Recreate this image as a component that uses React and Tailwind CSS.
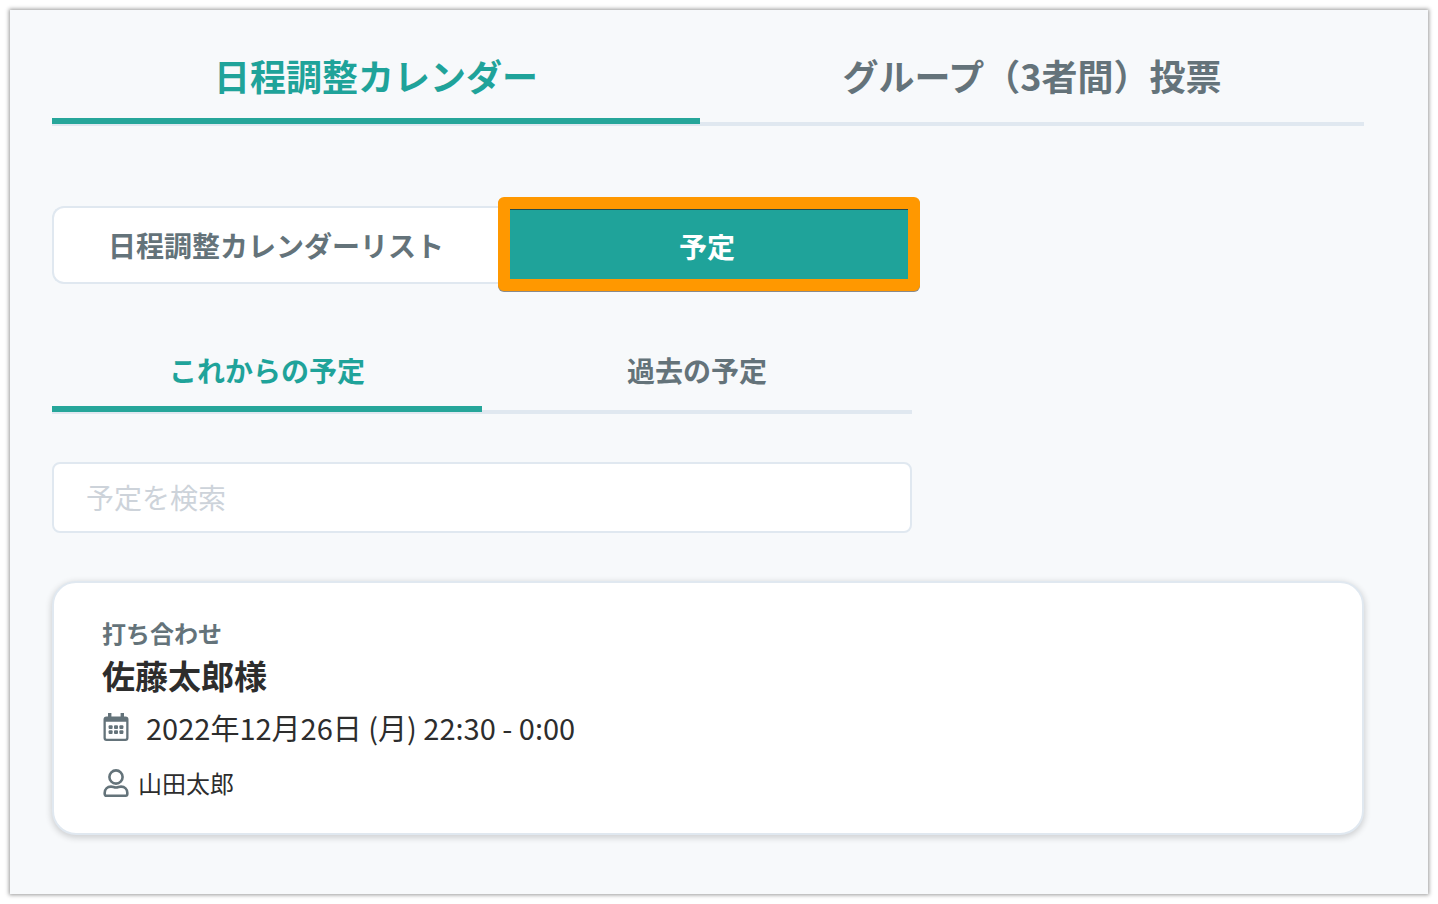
import { useState } from 'react';
import { clsx } from 'clsx';

const events = [
  { id: 1, type: '打ち合わせ', guest: '佐藤太郎様', date: '2022年12月26日 (月) 22:30 - 0:00', owner: '山田太郎' },
];

function CalendarIcon() {
  return (
    <svg viewBox="0 0 28 28" className="w-7 h-7 shrink-0 text-[#64737a]" fill="none" aria-hidden="true">
      <path d="M6 0h3.400v3.400h9.200V0H22v3.400h1.500a3 3 0 0 1 3 3V25a3 3 0 0 1-3 3h-19a3 3 0 0 1-3-3V6.400a3 3 0 0 1 3-3H6zM3.800 8.800V25c0 .5.300.800.800.800h18.800c.500 0 .800-.300.800-.800V8.800z" fill="currentColor" fillRule="evenodd" />
      {[12.2, 17.2].map(y => [6.600, 12, 17.400].map(x => (
        <rect key={`${x}-${y}`} x={x} y={y} width="4" height="3.800" rx="1" fill="currentColor" />
      )))}
    </svg>
  );
}

function UserIcon() {
  return (
    <svg viewBox="0 0 28 28" className="w-7 h-7 shrink-0 text-[#64737a]" fill="none" stroke="currentColor" strokeWidth="2.600" aria-hidden="true">
      <circle cx="14" cy="8" r="6.600" />
      <path d="M9 17.600c2.100 0 2.800.900 5 .900s2.900-.900 5-.900c3.700 0 6.300 2.500 6.300 6.200v1.300c0 .900-.700 1.600-1.600 1.600H4.300c-.900 0-1.600-.700-1.600-1.600v-1.300c0-3.700 2.600-6.200 6.300-6.200z" />
    </svg>
  );
}

function Tabs({ items, value, onChange, className, tabClassName }) {
  return (
    <div role="tablist" className={clsx('grid border-b-4 border-[#e0e8f0]', className)}>
      {items.map(item => (
        <button key={item} type="button" role="tab" aria-selected={value === item} onClick={() => onChange(item)}
          className={clsx('-mb-0.5 border-b-6 font-bold', tabClassName,
            value === item ? 'border-[#26a69a] text-[#1fa39a]' : 'border-transparent text-[#64737a]'
          )}
        >
          {item}
        </button>
      ))}
    </div>
  );
}

export default function App() {
  const [section, setSection] = useState('日程調整カレンダー');
  const [view, setView]       = useState('予定');
  const [period, setPeriod]   = useState('これからの予定');
  const [query, setQuery]     = useState('');

  const visible = events.filter(e => `${e.type}${e.guest}${e.owner}`.includes(query));

  return (
    <div className="min-h-screen flex bg-white p-2.5 font-['Noto_Sans_CJK_JP',sans-serif] text-[#2d2d2d]">
      <main className="flex-1 bg-[#f7f9fb] pl-[42px] pr-16 pt-9 pb-14 shadow-[0_0_4px_1px_rgba(0,0,0,0.4)]">
        <Tabs items={['日程調整カレンダー', 'グループ（3者間）投票']} value={section} onChange={setSection}
          className="grid-cols-[81fr_83fr]" tabClassName="h-[78px] pb-3.5 text-4xl" />

        {/* List / schedule switch */}
        <div className="mt-20 flex h-[78px] max-w-[860px]">
          <button type="button" onClick={() => setView('list')}
            className="flex-1 rounded-l-xl border-2 border-r-0 border-[#e0e8f0] bg-white text-[28px] font-bold text-[#64737a]"
          >
            日程調整カレンダーリスト
          </button>
          <button type="button" aria-pressed={view === '予定'} onClick={() => setView('予定')}
            className="-mt-[9px] -mr-2 h-[94px] w-[422px] rounded-md border-12 border-[#ff9800] bg-[#1fa39a] pt-1 pr-1 text-[28px] font-bold text-white shadow-[0_1px_0_#8a8a8a,inset_0_1px_0_#234b4a]"
          >
            予定
          </button>
        </div>

        <Tabs items={['これからの予定', '過去の予定']} value={period} onChange={setPeriod}
          className="mt-12 max-w-[860px] grid-cols-2" tabClassName="h-20 pt-0.5 text-[28px]" />

        <input type="search" aria-label="予定を検索" placeholder="予定を検索" value={query} onChange={e => setQuery(e.target.value)}
          className="mt-12 block h-[71px] w-full max-w-[860px] rounded-lg border-2 border-[#e0e8f0] bg-white px-8 pb-0.5 text-[28px] placeholder:text-[#cdd3da]" />

        {visible.map(e => (
          <article key={e.id} className="mt-12 rounded-3xl border-2 border-[#e0e8f0] bg-white px-12 pt-[30px] pb-[26px] shadow-[0_2px_6px_1px_rgba(0,0,0,0.16)]">
            <p className="text-2xl leading-10 font-bold text-[#64737a]">{e.type}</p>
            <h2 className="text-[33px] leading-11 font-bold">{e.guest}</h2>
            <p className="mt-1.5 flex items-center gap-4 text-[29px] leading-12">
              <CalendarIcon /> {e.date}
            </p>
            <p className="mt-2 flex items-center gap-2 text-2xl leading-12">
              <UserIcon /> {e.owner}
            </p>
          </article>
        ))}
      </main>
    </div>
  );
}
